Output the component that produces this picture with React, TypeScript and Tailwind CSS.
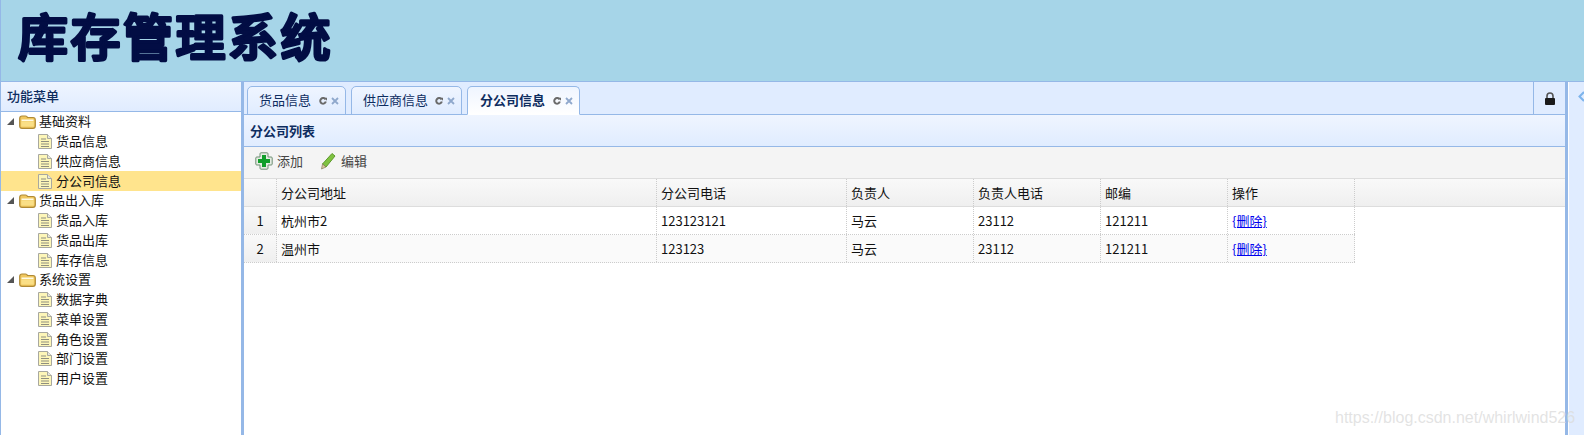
const CJK = "font-['Noto_Sans_CJK_SC','Liberation_Sans',sans-serif]";

type TreeGroup = { label: string; items: string[] };

const TREE: TreeGroup[] = [
  { label: "基础资料", items: ["货品信息", "供应商信息", "分公司信息"] },
  { label: "货品出入库", items: ["货品入库", "货品出库", "库存信息"] },
  { label: "系统设置", items: ["数据字典", "菜单设置", "角色设置", "部门设置", "用户设置"] },
];

const TABS = [
  { label: "货品信息", width: "w-[99px]", active: false },
  { label: "供应商信息", width: "w-[111px]", active: false },
  { label: "分公司信息", width: "w-[113px]", active: true },
];

const COLS = [
  { label: "分公司地址", width: "w-[380px]" },
  { label: "分公司电话", width: "w-[190px]" },
  { label: "负责人", width: "w-[127px]" },
  { label: "负责人电话", width: "w-[127px]" },
  { label: "邮编", width: "w-[127px]" },
  { label: "操作", width: "w-[127px]" },
];

const ROWS = [
  ["杭州市2", "123123121", "马云", "23112", "121211"],
  ["温州市", "123123", "马云", "23112", "121211"],
];

function IconExpanded() {
  return (
    <svg className="h-[9px] w-[9px] shrink-0" viewBox="0 0 9 9" aria-hidden>
      <path d="M8 1v7H1Z" fill="#555" />
    </svg>
  );
}

function IconFolder() {
  return (
    <svg className="h-[14px] w-[17px] shrink-0" viewBox="0 0 17 14" aria-hidden>
      <path d="M.7 3.5Q.7 1 3 1h3.5Q8 1 8.5 2.5h5.5q2.3 0 2.3 2.5v6q0 2.3-2.3 2.3H3q-2.3 0-2.3-2.3Z" fill="#f0c75e" stroke="#b08a35" strokeWidth="1.2" />
      <path d="M2.5 4.5h12v1.6h-12Z" fill="#fffbe6" />
      <path d="M2.2 6.4h12.6v5.2H2.2Z" fill="#fadf86" />
    </svg>
  );
}

function IconFile() {
  return (
    <svg className="h-[15px] w-[14px] shrink-0" viewBox="0 0 14 15" aria-hidden>
      <path d="M.5.5h9l4 4v10H.5Z" fill="#fdf6b8" stroke="#a8a8a0" />
      <path d="M9.5.5v4h4" fill="#e8e8dc" stroke="#a8a8a0" />
      <path d="M3 5h5M3 7.5h8M3 10h8M3 12.5h8" stroke="#8f8f80" />
    </svg>
  );
}

function IconRefresh() {
  return (
    <svg className="h-2 w-2 shrink-0" viewBox="0 0 8 8" fill="none" aria-hidden>
      <path d="M6.5 2.5A2.8 2.8 0 1 0 6.8 4.5" stroke="#6a6a6a" strokeWidth="2" />
      <path d="M5 .8h3v3Z" fill="#6a6a6a" />
    </svg>
  );
}

function IconClose() {
  return (
    <svg className="h-2 w-2 shrink-0" viewBox="0 0 8 8" fill="none" aria-hidden>
      <path d="m1 1 6 6M7 1 1 7" stroke="#8fa8cc" strokeWidth="1.8" />
    </svg>
  );
}

function IconAdd() {
  return (
    <svg className="h-[18px] w-[18px] shrink-0" viewBox="0 0 18 18" aria-hidden>
      <path d="M6 .8h6q1 0 1 1V5h3.200q1 0 1 1v6q0 1-1 1H13v3.200q0 1-1 1H6q-1 0-1-1V13H1.800q-1 0-1-1V6q0-1 1-1H5V1.800q0-1 1-1Z" fill="#e4ece2" stroke="#6f8f74" />
      <path d="M7 3h4v4h4v4h-4v4H7v-4H3V7h4Z" fill="#0f9e2a" />
    </svg>
  );
}

function IconPencil() {
  return (
    <svg className="h-[18px] w-4 shrink-0" viewBox="0 0 16 18" aria-hidden>
      <path d="M12 1.500 15 4 6 15l-3.500-3Z" fill="#7fc241" stroke="#5e9a2c" />
      <path d="M2.500 12 6 15l-4.500 2Z" fill="#d8c9a0" stroke="#77684a" strokeWidth=".6" />
    </svg>
  );
}

function IconLock() {
  return (
    <svg className="h-[13px] w-3 shrink-0" viewBox="0 0 12 13" aria-hidden>
      <path d="M3 6V4a3 3 0 0 1 6 0v2" fill="none" stroke="#555" strokeWidth="1.6" />
      <rect x="1" y="6" width="10" height="7" rx="1" fill="#1a1a1a" />
    </svg>
  );
}

function IconCollapse() {
  return (
    <svg className="h-[11px] w-[6px] shrink-0" viewBox="0 0 6 11" fill="none" aria-hidden>
      <path d="M6 1 1.500 5.500 6 10" stroke="#7db4ec" strokeWidth="2" />
    </svg>
  );
}

function Logo() {
  return (
    <svg className="h-[75px] w-[360px] overflow-visible" viewBox="0 0 360 75" aria-label="库存管理系统">
      <text
        x="2"
        y="50"
        fontSize="50"
        fontWeight="500"
        letterSpacing="2.500"
        fontFamily="'Noto Sans CJK SC', sans-serif"
        fill="#020d44"
        stroke="#020d44"
        strokeWidth="3.200"
        strokeLinejoin="round"
      >
        库存管理系统
      </text>
    </svg>
  );
}

function Sidebar() {
  return (
    <aside className="flex w-[241px] shrink-0 flex-col border-l border-[#95b8e7] bg-white">
      <div className="flex h-[30px] shrink-0 items-center border-b border-[#95b8e7] bg-gradient-to-b from-[#eff5ff] to-[#e0ecff] pb-[2px] pl-[6px] text-[13px] font-medium text-[#0e2d5f]">
        功能菜单
      </div>
      <div className="flex flex-col text-[13px] leading-none text-[#111]">
        {TREE.map((group) => (
          <div key={group.label} className="flex flex-col">
            <div className="flex h-[19.75px] items-center pl-[5px]">
              <IconExpanded />
              <span className="ml-[4px] flex"><IconFolder /></span>
              <span className="ml-[3px] pb-[2px]">{group.label}</span>
            </div>
            {group.items.map((item) => (
              <div
                key={item}
                className={`flex h-[19.75px] items-center pl-[37px] ${item === "分公司信息" ? "bg-[#ffe48d]" : ""}`}
              >
                <IconFile />
                <span className="ml-[4px] pb-[2px]">{item}</span>
              </div>
            ))}
          </div>
        ))}
      </div>
    </aside>
  );
}

function Tabs() {
  return (
    <div className="flex h-[33px] shrink-0 items-end border-b border-[#95b8e7] bg-[#e0ecff]">
      <div className="flex flex-1 items-end gap-[5px] pl-[3px]">
        {TABS.map((tab) => (
          <div
            key={tab.label}
            className={`-mb-px flex h-[29px] items-center rounded-t-[5px] border border-[#95b8e7] pr-[6px] text-[13px] text-[#0e2d5f] ${tab.width} ${
              tab.active ? "border-b-white bg-gradient-to-b from-[#eff5ff] to-white pl-[12px] font-bold" : "bg-gradient-to-b from-[#eff5ff] to-[#e0ecff] pl-[11px]"
            }`}
          >
            <span className="flex-1 whitespace-nowrap pb-[1px]">{tab.label}</span>
            <span className="flex items-center gap-[4px]">
              <IconRefresh />
              <IconClose />
            </span>
          </div>
        ))}
      </div>
      <div className="flex h-[32px] w-[32px] items-center justify-center border-l border-[#95b8e7]">
        <IconLock />
      </div>
    </div>
  );
}

function Grid() {
  return (
    <div className="flex flex-col text-[13px] text-[#111]">
      <div className="flex h-[28px] border-b border-[#ddd] bg-gradient-to-b from-[#f9f9f9] to-[#efefef]">
        <div className="w-[33px] shrink-0 border-r border-dotted border-[#ccc]" />
        {COLS.map((col) => (
          <div key={col.label} className={`flex shrink-0 items-center border-r border-dotted border-[#ccc] pl-[4px] ${col.width}`}>
            {col.label}
          </div>
        ))}
      </div>
      {ROWS.map((row, i) => (
        <div key={i} className={`flex h-[28px] w-max border-b border-dotted border-[#ccc] ${i === 1 ? "bg-[#fafafa]" : "bg-white"}`}>
          <div className="flex w-[33px] shrink-0 items-center justify-center border-r border-dotted border-[#ccc] bg-gradient-to-b from-[#f9f9f9] to-[#efefef]">
            {i + 1}
          </div>
          {row.map((value, j) => (
            <div key={j} className={`flex shrink-0 items-center border-r border-dotted border-[#ccc] pl-[4px] ${COLS[j].width}`}>
              {value}
            </div>
          ))}
          <div className={`flex shrink-0 items-center border-r border-dotted border-[#ccc] pl-[4px] ${COLS[5].width}`}>
            <a href="#" className="text-[#0000ee] underline">{"{删除}"}</a>
          </div>
        </div>
      ))}
    </div>
  );
}

export default function App() {
  return (
    <div className={`relative flex h-[435px] w-[1584px] flex-col overflow-hidden bg-white ${CJK}`}>
      <header className="flex h-[82px] shrink-0 items-start border-b border-l border-[#95b8e7] bg-[#a6d5e8] pl-[15px] pt-[6px]">
        <Logo />
      </header>
      <div className="flex min-h-0 flex-1">
        <Sidebar />
        <main className="flex w-[1327px] shrink-0 flex-col border-x-[3px] border-[#95b8e7] bg-white">
          <Tabs />
          <div className="flex h-[32px] shrink-0 items-center border-b border-[#95b8e7] bg-gradient-to-b from-[#eff5ff] to-[#e0ecff] pl-[6px] text-[13px] font-bold text-[#0e2d5f]">
            分公司列表
          </div>
          <div className="flex h-[32px] shrink-0 items-center border-b border-[#ddd] bg-[#f4f4f4] pb-[3px] pl-[11px] text-[13px] text-[#444]">
            <IconAdd />
            <span className="ml-[4px]">添加</span>
            <span className="ml-[17px] flex"><IconPencil /></span>
            <span className="ml-[5px]">编辑</span>
          </div>
          <Grid />
        </main>
        <div className="flex flex-1 items-start justify-end border-l border-white bg-[#e0ecff] pt-[9px]">
          <IconCollapse />
        </div>
      </div>
      <span className="absolute bottom-[9px] left-[1335px] font-['Liberation_Sans',sans-serif] text-[16px] leading-none text-[#dcdcdc]/80">
        https://blog.csdn.net/whirlwind526
      </span>
    </div>
  );
}
